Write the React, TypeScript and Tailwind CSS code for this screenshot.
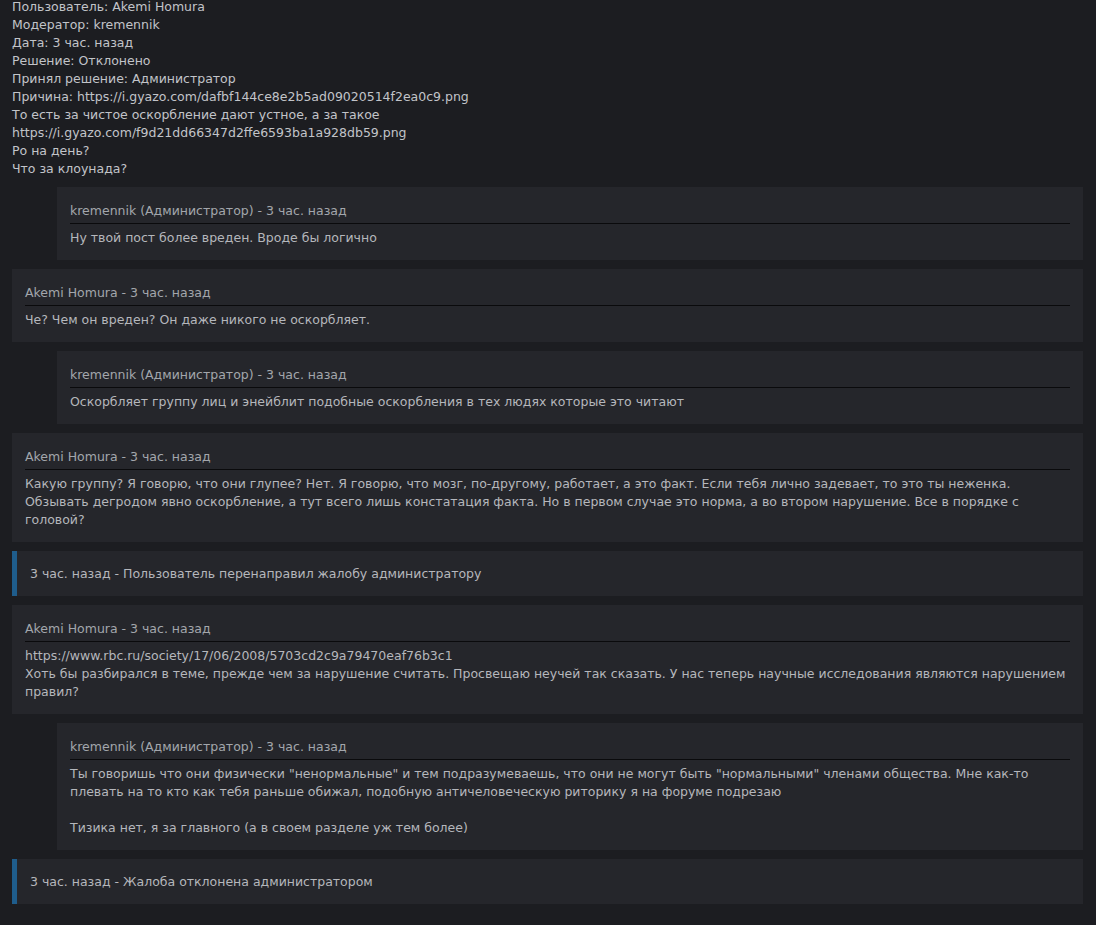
import React from "react";

type Msg =
  | { kind: "comment"; nested?: boolean; header: string; body: string[] }
  | { kind: "system"; text: string };

const messages: Msg[] = [
  {
    kind: "comment",
    nested: true,
    header: "kremennik (Администратор) - 3 час. назад",
    body: ["Ну твой пост более вреден. Вроде бы логично"],
  },
  {
    kind: "comment",
    header: "Akemi Homura - 3 час. назад",
    body: ["Че? Чем он вреден? Он даже никого не оскорбляет."],
  },
  {
    kind: "comment",
    nested: true,
    header: "kremennik (Администратор) - 3 час. назад",
    body: ["Оскорбляет группу лиц и энейблит подобные оскорбления в тех людях которые это читают"],
  },
  {
    kind: "comment",
    header: "Akemi Homura - 3 час. назад",
    body: [
      "Какую группу? Я говорю, что они глупее? Нет. Я говорю, что мозг, по-другому, работает, а это факт. Если тебя лично задевает, то это ты неженка. Обзывать дегродом явно оскорбление, а тут всего лишь констатация факта. Но в первом случае это норма, а во втором нарушение. Все в порядке с головой?",
    ],
  },
  { kind: "system", text: "3 час. назад - Пользователь перенаправил жалобу администратору" },
  {
    kind: "comment",
    header: "Akemi Homura - 3 час. назад",
    body: [
      "https://www.rbc.ru/society/17/06/2008/5703cd2c9a79470eaf76b3c1",
      "Хоть бы разбирался в теме, прежде чем за нарушение считать. Просвещаю неучей так сказать. У нас теперь научные исследования являются нарушением правил?",
    ],
  },
  {
    kind: "comment",
    nested: true,
    header: "kremennik (Администратор) - 3 час. назад",
    body: [
      "Ты говоришь что они физически \"ненормальные\" и тем подразумеваешь, что они не могут быть \"нормальными\" членами общества. Мне как-то плевать на то кто как тебя раньше обижал, подобную античеловеческую риторику я на форуме подрезаю",
      "",
      "Тизика нет, я за главного (а в своем разделе уж тем более)",
    ],
  },
  { kind: "system", text: "3 час. назад - Жалоба отклонена администратором" },
];

const topLines = [
  "Пользователь: Akemi Homura",
  "Модератор: kremennik",
  "Дата: 3 час. назад",
  "Решение: Отклонено",
  "Принял решение: Администратор",
  "Причина: https://i.gyazo.com/dafbf144ce8e2b5ad09020514f2ea0c9.png",
  "То есть за чистое оскорбление дают устное, а за такое",
  "https://i.gyazo.com/f9d21dd66347d2ffe6593ba1a928db59.png",
  "Ро на день?",
  "Что за клоунада?",
];

export default function App() {
  return (
    <div
      className="flow-root min-h-[925px] w-full bg-[#1c1d21] pl-[12px] pr-[13px] text-[12.5px] leading-[18px]"
      style={{ fontFamily: '"DejaVu Sans", Verdana, sans-serif' }}
    >
      <div className="-mt-[2px] pb-[9px] text-[#c2c4c9]">
        {topLines.map((l, i) => (
          <div key={i}>{l}</div>
        ))}
      </div>
      <div className="flex flex-col gap-[9px] pb-[21px]">
        {messages.map((m, i) =>
          m.kind === "system" ? (
            <div
              key={i}
              className="border-l-[5px] border-[#1f5d8c] bg-[#25262b] py-[13.5px] pl-[13px] text-[#b5b7bc]"
            >
              {m.text}
            </div>
          ) : (
            <div
              key={i}
              className={`bg-[#25262b] px-[13px] pt-[15px] pb-[13px] ${m.nested ? "ml-[45px]" : ""}`}
            >
              <div className="border-b border-[#0a0a0c] pb-[3px] text-[#a3a6ac]">{m.header}</div>
              <div className="mt-[5px] text-[#b5b7bc]">
                {m.body.map((b, j) => (
                  <div key={j} className="min-h-[18px]">
                    {b}
                  </div>
                ))}
              </div>
            </div>
          )
        )}
      </div>
    </div>
  );
}
